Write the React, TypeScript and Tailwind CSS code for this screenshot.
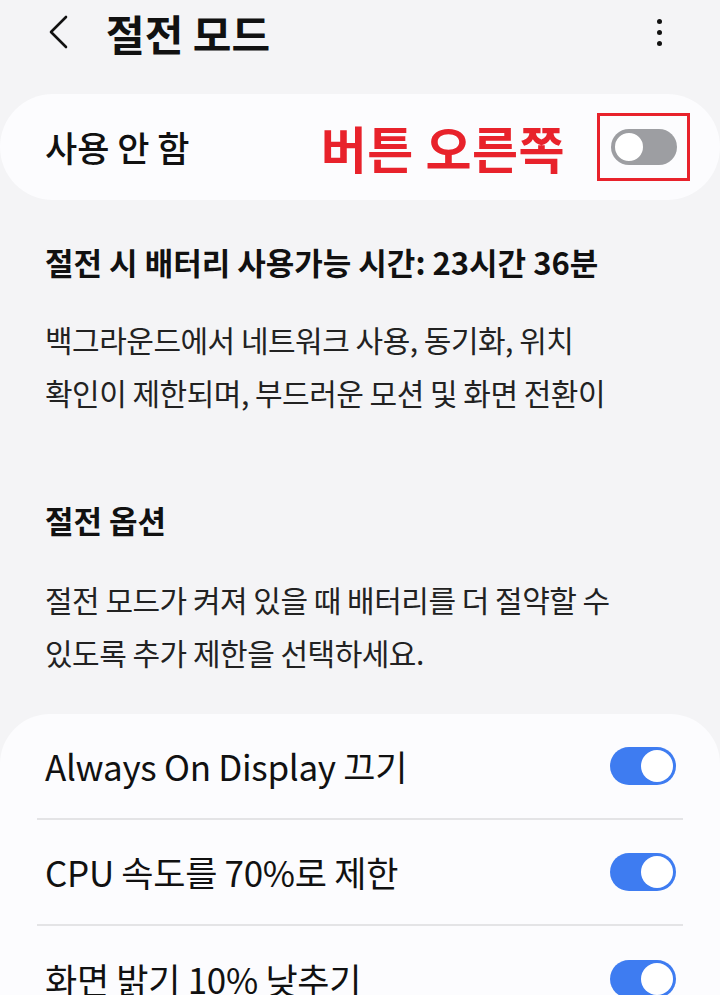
import React from 'react';

const font = { fontFamily: '"Noto Sans CJK KR", "Noto Sans", sans-serif' };

const Toggle = ({ on }: { on: boolean }) =>
  on ? (
    <div className="w-[66px] h-[38px] rounded-full bg-[#3e7cf1] flex items-center justify-end pr-[3px]">
      <div className="w-[32px] h-[32px] rounded-full bg-white" />
    </div>
  ) : (
    <div className="w-[66px] h-[36px] rounded-full bg-[#9d9ea2] flex items-center pl-[1px]">
      <div className="w-[34px] h-[34px] rounded-full bg-white border-[3px] border-[#9d9ea2]" />
    </div>
  );

const rows = ['Always On Display 끄기', 'CPU 속도를 70%로 제한', '화면 밝기 10% 낮추기'];

export default function App() {
  return (
    <div className="w-[720px] h-[995px] overflow-hidden bg-[#f4f4f6] text-[#111]" style={font}>
      <div className="h-[94px] flex items-center pl-[46px] pr-[58px]">
        <svg width="24" height="36" viewBox="0 0 24 36" className="mr-[36px] -mt-[30px]">
          <path d="M20 3 L5 18 L20 33" fill="none" stroke="#111" strokeWidth="2.6" strokeLinecap="round" strokeLinejoin="round" />
        </svg>
        <h1 className="text-[42px] font-bold -mt-[30px]">절전 모드</h1>
        <div className="ml-auto -mt-[30px] flex flex-col gap-[6px]">
          <div className="w-[5px] h-[5px] rounded-full bg-[#111]" />
          <div className="w-[5px] h-[5px] rounded-full bg-[#111]" />
          <div className="w-[5px] h-[5px] rounded-full bg-[#111]" />
        </div>
      </div>

      <div className="h-[106px] rounded-[53px] bg-[#fcfcfe] flex items-center pl-[45px] pr-[30px]">
        <span className="text-[35px] font-medium">사용 안 함</span>
        <span className="ml-auto mr-[32px] text-[50px] font-bold text-[#e8222b] tracking-[0.5px]">버튼 오른쪽</span>
        <div className="w-[93px] h-[68px] border-[3px] border-[#e8222b] flex items-center justify-center">
          <Toggle on={false} />
        </div>
      </div>

      <div className="px-[45px]">
        <p className="mt-[42px] text-[31px] font-bold leading-[40px]">절전 시 배터리 사용가능 시간: 23시간 36분</p>
        <p className="mt-[31px] text-[30px] leading-[53px] tracking-[-0.5px] text-[#222]">
          백그라운드에서 네트워크 사용, 동기화, 위치
          <br />
          확인이 제한되며, 부드러운 모션 및 화면 전환이
        </p>
        <p className="mt-[81px] text-[31px] font-bold leading-[40px]">절전 옵션</p>
        <p className="mt-[33px] text-[30px] leading-[53px] tracking-[-0.5px] text-[#222]">
          절전 모드가 켜져 있을 때 배터리를 더 절약할 수
          <br />
          있도록 추가 제한을 선택하세요.
        </p>
      </div>

      <div className="mt-[35px] rounded-t-[50px] bg-[#fcfcfe] px-[37px]">
        {rows.map((r, i) => (
          <div key={r} className={`h-[106px] flex items-center pl-[8px] pr-[7px] ${i < rows.length - 1 ? 'border-b-2 border-[#e4e4e6]' : ''}`}>
            <span className="text-[35px] tracking-[-0.3px]">{r}</span>
            <div className="ml-auto">
              <Toggle on />
            </div>
          </div>
        ))}
      </div>
    </div>
  );
}
